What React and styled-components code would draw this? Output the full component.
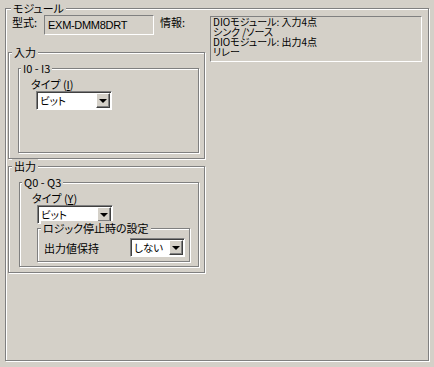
import styled, { createGlobalStyle } from "styled-components";

const GlobalStyle = createGlobalStyle`
  body {
    margin: 0;
    background: #d4d0c8;
    font-family: "Noto Sans CJK JP", "Liberation Sans", sans-serif;
    font-size: 11px;
    font-feature-settings: "palt";
    color: #000;
  }
`;

const Page = styled.div`
  width: 434px;
  height: 367px;
  padding: 8px 0 0 5px;
  box-sizing: border-box;
`;

const Group = styled.div`
  position: relative;
  box-sizing: border-box;
  width: ${({ w }) => w}px;
  height: ${({ h }) => h}px;
  border: 1px solid #808080;
  box-shadow: inset 1px 1px 0 #fff, 1px 1px 0 #fff;
  padding: ${({ pad }) => pad || "0"};
  margin: ${({ m }) => m || "0"};
`;

const Legend = styled.span`
  position: absolute;
  top: -8px;
  left: ${({ left }) => left || 5}px;
  padding: 0 2px;
  background: #d4d0c8;
  line-height: 14px;
  white-space: nowrap;
`;

const TopGrid = styled.div`
  display: grid;
  grid-template-columns: 152px 50px 1fr;
  grid-template-rows: 37px auto auto;
`;

const ModelRow = styled.div`
  display: flex;
  align-items: flex-start;
  padding-left: 4px;
  gap: 7px;
`;

const Label = styled.span`
  line-height: 14px;
  white-space: nowrap;
`;

const InfoLabel = styled(Label)`
  grid-column: 2;
  grid-row: 1;
`;

const Sunken = styled.div`
  box-sizing: border-box;
  border: 1px solid;
  border-color: #808080 #fff #fff #808080;
  background: ${({ white }) => (white ? "#fff" : "#d4d0c8")};
`;

const ModelBox = styled(Sunken)`
  width: 110px;
  height: 20px;
  padding: 2px 3px;
  line-height: 14px;
  font-family: "Liberation Sans", sans-serif;
  font-size: 11px;
  letter-spacing: -0.3px;
`;

const InfoBox = styled(Sunken)`
  grid-column: 3;
  grid-row: 1 / span 2;
  align-self: start;
  margin-top: 1px;
  height: 46px;
  padding: 0 2px;
  line-height: 10px;
  font-size: 10px;
`;

const WideCell = styled.div`
  grid-column: 1 / span 2;
`;

const Caption = styled.div`
  line-height: 14px;
  margin: ${({ m }) => m || "0"};
  u {
    text-decoration: underline;
  }
`;

const Combo = styled(Sunken)`
  display: flex;
  width: ${({ w }) => w}px;
  height: 19px;
  margin: ${({ m }) => m || "0"};
  box-shadow: inset 1px 1px 0 #404040;
  padding: 1px 1px 1px 2px;
`;

const ComboText = styled.span`
  flex: 1;
  line-height: 15px;
  padding-left: 1px;
  font-size: 10.5px;
`;

const DropButton = styled.span`
  width: 14px;
  box-sizing: border-box;
  background: #d4d0c8;
  border: 1px solid;
  border-color: #fff #404040 #404040 #fff;
  box-shadow: inset -1px -1px 0 #808080;
  display: flex;
  align-items: center;
  justify-content: center;
  &::after {
    content: "";
    border-left: 4px solid transparent;
    border-right: 4px solid transparent;
    border-top: 4px solid #000;
    margin-top: 1px;
  }
`;

const HoldRow = styled.div`
  display: flex;
  align-items: center;
  justify-content: space-between;
  padding: 9px 4px 0 6px;
`;

const ComboBox = ({ value, w, m }) => (
  <Combo white w={w} m={m}>
    <ComboText>{value}</ComboText>
    <DropButton />
  </Combo>
);

export default function App() {
  return (
    <>
      <GlobalStyle />
      <Page>
        <Group w={424} h={353} pad="6px 6px 0 2px">
          <Legend left={5}>モジュール</Legend>
          <TopGrid>
            <ModelRow>
              <Label>型式:</Label>
              <ModelBox>EXM-DMM8DRT</ModelBox>
            </ModelRow>
            <InfoLabel>情報:</InfoLabel>
            <InfoBox>
              <div>DIOモジュール: 入力4点</div>
              <div>シンク /ソース</div>
              <div>DIOモジュール: 出力4点</div>
              <div>リレー</div>
            </InfoBox>
            <WideCell>
              <Group w={197} h={107} pad="15px 0 0 9px">
                <Legend left={3}>入力</Legend>
                <Group w={181} h={85} pad="8px 0 0 12px">
                  <Legend left={2}>I0 - I3</Legend>
                  <Caption>
                    タイプ (<u>I</u>)
                  </Caption>
                  <ComboBox value="ビット" w={76} m="0 0 0 5px" />
                </Group>
              </Group>
              <Group w={197} h={107} m="7px 0 0" pad="15px 0 0 10px">
                <Legend left={3}>出力</Legend>
                <Group w={180} h={85} pad="8px 0 0 12px">
                  <Legend left={2}>Q0 - Q3</Legend>
                  <Caption>
                    タイプ (<u>Y</u>)
                  </Caption>
                  <ComboBox value="ビット" w={76} m="0 0 0 5px" />
                  <Group w={153} h={34} m="4px 0 0 5px">
                    <Legend left={3}>ロジック停止時の設定</Legend>
                    <HoldRow>
                      <Label>出力値保持</Label>
                      <ComboBox value="しない" w={55} />
                    </HoldRow>
                  </Group>
                </Group>
              </Group>
            </WideCell>
          </TopGrid>
        </Group>
      </Page>
    </>
  );
}
